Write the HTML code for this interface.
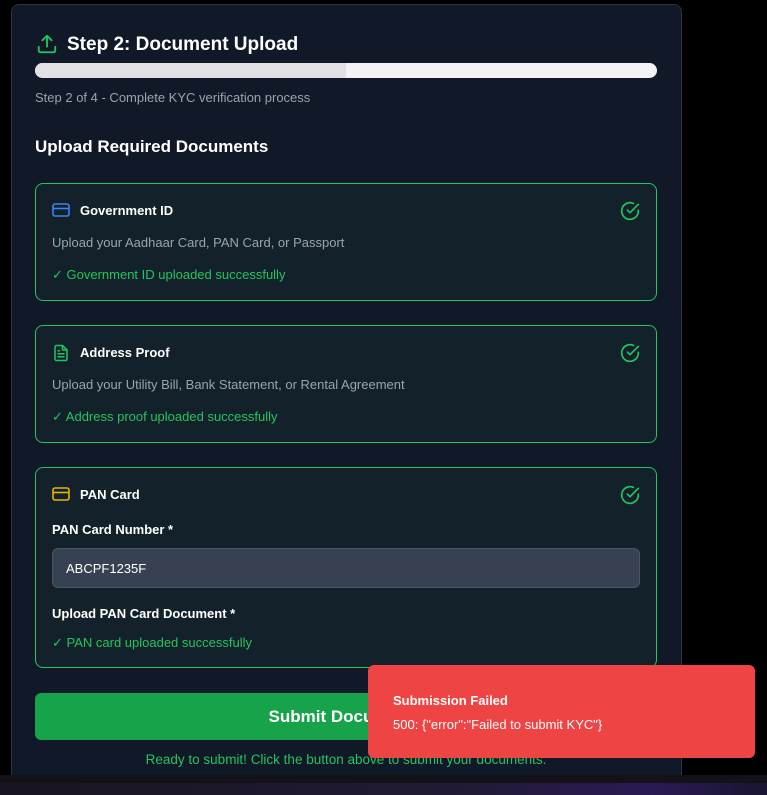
<!DOCTYPE html>
<html><head><meta charset="utf-8"><style>
*{box-sizing:border-box;margin:0;padding:0}
body{width:767px;height:795px;background:#000;font-family:"Liberation Sans",sans-serif;position:relative;overflow:hidden;color:#fff}
.card{position:absolute;left:11px;top:4px;width:671px;height:790px;background:#111827;border:1px solid #2b3442;border-radius:8px}
.abs{position:absolute}
.h1{left:67px;top:34px;font-size:19px;font-weight:bold;color:#fff}
.bar{left:35px;top:63px;width:622px;height:15px;border-radius:8px;background:#f3f3f5;overflow:hidden}
.bar div{width:311px;height:100%;background:#e0e0e5}
.sub{left:35px;top:90px;font-size:13px;color:#9ca3af}
.h2{left:35px;top:137px;font-size:17px;font-weight:bold}
.sec{position:absolute;left:35px;width:622px;border:1px solid #22c55e;border-radius:8px;background:#13222a}
.t{position:absolute;left:44px;top:19px;font-size:13px;font-weight:bold}
.d{position:absolute;left:16px;font-size:13px;color:#9ca3af}
.ok{position:absolute;left:16px;font-size:13px;color:#22c55e}
.ic{position:absolute;left:16px;top:18px}
.chk{position:absolute;right:16px;top:17px}
.lbl{position:absolute;left:16px;font-size:13px;font-weight:bold}
.inp{position:absolute;left:16px;top:80px;width:588px;height:40px;background:#374151;border:1px solid #4b5563;border-radius:6px;font-size:13px;padding:12px 13px;color:#fff}
.btn{left:35px;top:693px;width:622px;height:47px;background:#16a34a;border-radius:6px;font-size:17px;font-weight:bold;text-align:center;line-height:47px}
.rdy{left:35px;top:752px;width:622px;text-align:center;font-size:13.5px;color:#22c55e}
.toast{left:368px;top:665px;width:387px;height:93px;background:#ef4444;border-radius:6px}
.toast b{position:absolute;left:25px;top:28px;font-size:13px}
.toast span{position:absolute;left:25px;top:52px;font-size:13px}
.tb1{left:0;top:775px;width:767px;height:8px;background:#121218}
.tb2{left:0;top:783px;width:767px;height:12px;background:linear-gradient(90deg,#1a1420,#221a35 60%,#2a1a55 85%,#1a1530)}
</style></head><body>
<div class="card"></div>
<svg class="abs" style="left:36px;top:33px" width="22" height="22" viewBox="0 0 24 24" fill="none" stroke="#22c55e" stroke-width="2" stroke-linecap="round" stroke-linejoin="round"><path d="M21 15v4a2 2 0 0 1-2 2H5a2 2 0 0 1-2-2v-4"/><path d="M17 8l-5-5-5 5"/><path d="M12 3v12"/></svg>
<div class="abs h1">Step 2: Document Upload</div>
<div class="abs bar"><div></div></div>
<div class="abs sub">Step 2 of 4 - Complete KYC verification process</div>
<div class="abs h2">Upload Required Documents</div>

<div class="sec" style="top:183px;height:118px">
<svg class="ic" width="18" height="16" viewBox="0 0 18 16" fill="none" stroke="#3b82f6" stroke-width="1.6"><rect x="1" y="2" width="16" height="12" rx="2"/><path d="M1 6.5h16"/></svg>
<div class="t">Government ID</div>
<svg class="chk" width="20" height="20" viewBox="0 0 24 24" fill="none" stroke="#22c55e" stroke-width="2" stroke-linecap="round" stroke-linejoin="round"><path d="M22 11.08V12a10 10 0 1 1-5.93-9.14"/><path d="M22 4L12 14.01l-3-3"/></svg>
<div class="d" style="top:51px">Upload your Aadhaar Card, PAN Card, or Passport</div>
<div class="ok" style="top:83px">✓ Government ID uploaded successfully</div>
</div>

<div class="sec" style="top:325px;height:118px">
<svg class="ic" style="top:17px" width="18" height="20" viewBox="0 0 24 24" fill="none" stroke="#22c55e" stroke-width="2" stroke-linecap="round" stroke-linejoin="round"><path d="M14 2H6a2 2 0 0 0-2 2v16a2 2 0 0 0 2 2h12a2 2 0 0 0 2-2V8z"/><path d="M14 2v6h6"/><path d="M8 13h8M8 17h8M8 9h2"/></svg>
<div class="t">Address Proof</div>
<svg class="chk" width="20" height="20" viewBox="0 0 24 24" fill="none" stroke="#22c55e" stroke-width="2" stroke-linecap="round" stroke-linejoin="round"><path d="M22 11.08V12a10 10 0 1 1-5.93-9.14"/><path d="M22 4L12 14.01l-3-3"/></svg>
<div class="d" style="top:51px">Upload your Utility Bill, Bank Statement, or Rental Agreement</div>
<div class="ok" style="top:83px">✓ Address proof uploaded successfully</div>
</div>

<div class="sec" style="top:467px;height:201px">
<svg class="ic" width="18" height="16" viewBox="0 0 18 16" fill="none" stroke="#eab308" stroke-width="1.6"><rect x="1" y="2" width="16" height="12" rx="2"/><path d="M1 6.5h16"/></svg>
<div class="t">PAN Card</div>
<svg class="chk" width="20" height="20" viewBox="0 0 24 24" fill="none" stroke="#22c55e" stroke-width="2" stroke-linecap="round" stroke-linejoin="round"><path d="M22 11.08V12a10 10 0 1 1-5.93-9.14"/><path d="M22 4L12 14.01l-3-3"/></svg>
<div class="lbl" style="top:54px">PAN Card Number *</div>
<div class="inp">ABCPF1235F</div>
<div class="lbl" style="top:138px">Upload PAN Card Document *</div>
<div class="ok" style="top:167px">✓ PAN card uploaded successfully</div>
</div>

<div class="abs btn">Submit Documents</div>
<div class="abs rdy">Ready to submit! Click the button above to submit your documents.</div>
<div class="abs toast"><b>Submission Failed</b><span>500: {"error":"Failed to submit KYC"}</span></div>
<div class="abs tb1"></div>
<div class="abs tb2"></div>
</body></html>
